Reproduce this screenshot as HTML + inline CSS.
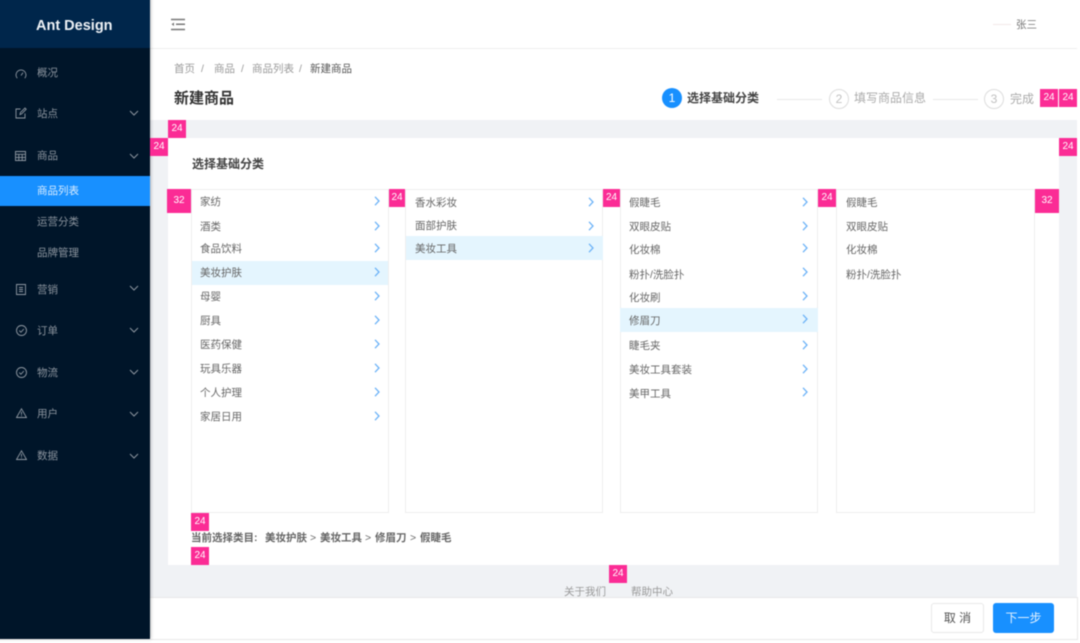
<!DOCTYPE html>
<html lang="zh"><head><meta charset="utf-8"><style>
html,body{margin:0;padding:0;background:#fff}
#o{position:relative;width:1080px;height:643px;overflow:hidden}
#r{position:relative;width:1080px;height:643px;background:#fff;font-family:"Liberation Sans","Noto Sans CJK SC",sans-serif;font-size:10.5px;color:#666;filter:blur(.5px)}
#r div,#r svg{position:absolute}
.t{white-space:nowrap;line-height:14px}
.p{background:#fb2c95;color:#fff;font-size:10px;text-align:center;line-height:18px;width:18px;height:18px}
.m{left:37px;color:#8b949e}
.col{background:#fff;border:1px solid #eee;box-sizing:border-box;top:189px;height:324px}
.hl{background:#e4f5fe;height:24px}
.i{color:#666}
svg.ic{fill:none;stroke:#8f98a2;stroke-width:.9}
svg.ch{fill:none;stroke:#8b949e;stroke-width:1;width:10px;height:6px;left:129px}
svg.ar{fill:none;stroke:#6db3f7;stroke-width:1.3;width:6px;height:10px}
</style></head><body><div id="o"><div id="r">
<div style="left:150px;top:0;width:927px;height:49px;background:#fff;border-bottom:1px solid #eee;box-sizing:border-box"></div>
<div style="left:150px;top:49px;width:927px;height:71px;background:#fff"></div>
<div style="left:150px;top:120px;width:927px;height:477px;background:#f0f2f5"></div>
<div style="left:168px;top:138px;width:891px;height:427px;background:#fff"></div>
<div style="left:150px;top:597px;width:928px;height:43px;background:#fff;border:1px solid #e8e8e8;box-sizing:border-box;border-left:0"></div>

<div style="left:-6px;top:-6px;width:155.5px;height:645px;background:#001529;box-shadow:1px 0 3px rgba(0,0,0,.25)"></div>
<div style="left:-6px;top:-6px;width:155.5px;height:54px;background:#00264b"></div>
<div class="t" style="left:36px;top:18px;font-size:14.5px;font-weight:bold;color:#eef2f6;line-height:16px">Ant Design</div>
<div style="left:-6px;top:176px;width:155.5px;height:30px;background:#1890ff"></div>

<svg class="ic" style="left:15px;top:68px" width="12" height="12" viewBox="0 0 12 12"><path d="M2.2 10.2A5 5 0 1 1 9.8 10.2M6 7.5L8 4.6"/></svg>
<div class="t m" style="top:66px">概况</div>
<svg class="ic" style="left:15px;top:107px" width="12" height="12" viewBox="0 0 12 12"><path d="M10 6.5V11H1V2H5.5M5 7.5L5.4 5.6L10 1L11.2 2.2L6.6 6.9Z"/></svg>
<div class="t m" style="top:107px">站点</div>
<svg class="ch" style="top:110px" viewBox="0 0 10 6"><path d="M1 1L5 5L9 1"/></svg>
<svg class="ic" style="left:15px;top:151px" width="11" height="10" viewBox="0 0 11 10"><path d="M.5.5H10.5V9.5H.5ZM.5 3.3H10.5M.5 6.4H10.5M3.8 3.3V9.5M7.2 3.3V9.5"/></svg>
<div class="t m" style="top:149px">商品</div>
<svg class="ch" style="top:153px" viewBox="0 0 10 6"><path d="M1 1L5 5L9 1"/></svg>
<div class="t" style="left:37px;top:184px;color:#d8ecff">商品列表</div>
<div class="t m" style="top:215px">运营分类</div>
<div class="t m" style="top:246px">品牌管理</div>
<svg class="ic" style="left:16px;top:284px" width="10" height="11" viewBox="0 0 10 11"><path d="M.5.5H9.5V10.5H.5ZM3 3.5H7M3 5.5H7M3 7.5H7"/></svg>
<div class="t m" style="top:283px">营销</div>
<svg class="ch" style="top:285px" viewBox="0 0 10 6"><path d="M1 1L5 5L9 1"/></svg>
<svg class="ic" style="left:16px;top:325px" width="11" height="11" viewBox="0 0 11 11"><circle cx="5.5" cy="5.5" r="5"/><path d="M3.2 5.6L4.9 7.2L7.9 4"/></svg>
<div class="t m" style="top:324px">订单</div>
<svg class="ch" style="top:327px" viewBox="0 0 10 6"><path d="M1 1L5 5L9 1"/></svg>
<svg class="ic" style="left:16px;top:367px" width="11" height="11" viewBox="0 0 11 11"><circle cx="5.5" cy="5.5" r="5"/><path d="M3.2 5.6L4.9 7.2L7.9 4"/></svg>
<div class="t m" style="top:366px">物流</div>
<svg class="ch" style="top:369px" viewBox="0 0 10 6"><path d="M1 1L5 5L9 1"/></svg>
<svg class="ic" style="left:16px;top:408px" width="11" height="10" viewBox="0 0 11 10"><path d="M5.5.8L10.5 9.5H.5ZM5.5 3.8V6.8M5.5 7.4V8.3"/></svg>
<div class="t m" style="top:407px">用户</div>
<svg class="ch" style="top:411px" viewBox="0 0 10 6"><path d="M1 1L5 5L9 1"/></svg>
<svg class="ic" style="left:16px;top:450px" width="11" height="10" viewBox="0 0 11 10"><path d="M5.5.8L10.5 9.5H.5ZM5.5 3.8V6.8M5.5 7.4V8.3"/></svg>
<div class="t m" style="top:449px">数据</div>
<svg class="ch" style="top:453px" viewBox="0 0 10 6"><path d="M1 1L5 5L9 1"/></svg>

<svg style="left:170px;top:18px" width="16" height="13" viewBox="0 0 16 13" fill="none" stroke="#777" stroke-width="1.5"><path d="M1 1.5H15M6 6.3H15M1 11.5H15"/><path d="M4 4.5V8L1.5 6.3Z" fill="#777" stroke="none"/></svg>
<div style="left:993px;top:24px;width:18px;height:1px;background:#f3e9e9"></div>
<div class="t" style="left:1016px;top:18px;color:#777">张三</div>

<div class="t" style="left:174px;top:62px;color:#999">首页</div><div class="t" style="left:201px;top:62px;color:#999">/</div>
<div class="t" style="left:214px;top:62px;color:#999">商品</div><div class="t" style="left:241px;top:62px;color:#999">/</div>
<div class="t" style="left:252px;top:62px;color:#999">商品列表</div><div class="t" style="left:299px;top:62px;color:#999">/</div>
<div class="t" style="left:310px;top:62px;color:#555">新建商品</div>
<div class="t" style="left:174px;top:90px;font-size:15px;font-weight:bold;color:#333;line-height:18px">新建商品</div>

<div style="left:662px;top:88px;width:20px;height:20px;border-radius:50%;background:#1890ff;color:#fff;text-align:center;line-height:20px;font-size:12px">1</div>
<div class="t" style="left:687px;top:91px;font-size:12px;font-weight:bold;color:#444">选择基础分类</div>
<div style="left:777px;top:99px;width:45px;height:1px;background:#e8e8e8"></div>
<div style="left:829px;top:89px;width:20px;height:20px;box-sizing:border-box;border-radius:50%;border:1px solid #ddd;color:#c0c0c0;text-align:center;line-height:18px;font-size:12px">2</div>
<div class="t" style="left:854px;top:91px;font-size:12px;color:#aaa">填写商品信息</div>
<div style="left:933px;top:99px;width:45px;height:1px;background:#e8e8e8"></div>
<div style="left:984px;top:89px;width:20px;height:20px;box-sizing:border-box;border-radius:50%;border:1px solid #ddd;color:#c0c0c0;text-align:center;line-height:18px;font-size:12px">3</div>
<div class="t" style="left:1010px;top:92px;font-size:12px;color:#aaa">完成</div>

<div class="t" style="left:192px;top:157px;font-size:12px;font-weight:bold;color:#444">选择基础分类</div>

<div class="col" style="left:191px;width:198px"></div>
<div class="col" style="left:405px;width:198px"></div>
<div class="col" style="left:620px;width:198px"></div>
<div class="col" style="left:836px;width:199px"></div>
<div class="hl" style="left:192px;top:261px;width:196px"></div>
<div class="hl" style="left:406px;top:236px;width:197px"></div>
<div class="hl" style="left:620px;top:308px;width:198px"></div>

<div class="t i" style="left:200px;top:195px">家纺</div><svg class="ar" style="left:374px;top:196px" viewBox="0 0 6 10"><path d="M1 .8L5 5L1 9.2"/></svg>
<div class="t i" style="left:200px;top:220px">酒类</div><svg class="ar" style="left:374px;top:221px" viewBox="0 0 6 10"><path d="M1 .8L5 5L1 9.2"/></svg>
<div class="t i" style="left:200px;top:242px">食品饮料</div><svg class="ar" style="left:374px;top:243px" viewBox="0 0 6 10"><path d="M1 .8L5 5L1 9.2"/></svg>
<div class="t i" style="left:200px;top:266px">美妆护肤</div><svg class="ar" style="left:374px;top:267px" viewBox="0 0 6 10"><path d="M1 .8L5 5L1 9.2"/></svg>
<div class="t i" style="left:200px;top:290px">母婴</div><svg class="ar" style="left:374px;top:291px" viewBox="0 0 6 10"><path d="M1 .8L5 5L1 9.2"/></svg>
<div class="t i" style="left:200px;top:314px">厨具</div><svg class="ar" style="left:374px;top:315px" viewBox="0 0 6 10"><path d="M1 .8L5 5L1 9.2"/></svg>
<div class="t i" style="left:200px;top:338px">医药保健</div><svg class="ar" style="left:374px;top:339px" viewBox="0 0 6 10"><path d="M1 .8L5 5L1 9.2"/></svg>
<div class="t i" style="left:200px;top:362px">玩具乐器</div><svg class="ar" style="left:374px;top:363px" viewBox="0 0 6 10"><path d="M1 .8L5 5L1 9.2"/></svg>
<div class="t i" style="left:200px;top:386px">个人护理</div><svg class="ar" style="left:374px;top:387px" viewBox="0 0 6 10"><path d="M1 .8L5 5L1 9.2"/></svg>
<div class="t i" style="left:200px;top:410px">家居日用</div><svg class="ar" style="left:374px;top:411px" viewBox="0 0 6 10"><path d="M1 .8L5 5L1 9.2"/></svg>

<div class="t i" style="left:415px;top:196px">香水彩妆</div><svg class="ar" style="left:588px;top:197px" viewBox="0 0 6 10"><path d="M1 .8L5 5L1 9.2"/></svg>
<div class="t i" style="left:415px;top:219px">面部护肤</div><svg class="ar" style="left:588px;top:221px" viewBox="0 0 6 10"><path d="M1 .8L5 5L1 9.2"/></svg>
<div class="t i" style="left:415px;top:242px">美妆工具</div><svg class="ar" style="left:588px;top:243px" viewBox="0 0 6 10"><path d="M1 .8L5 5L1 9.2"/></svg>

<div class="t i" style="left:629px;top:196px">假睫毛</div><svg class="ar" style="left:802px;top:197px" viewBox="0 0 6 10"><path d="M1 .8L5 5L1 9.2"/></svg>
<div class="t i" style="left:629px;top:220px">双眼皮贴</div><svg class="ar" style="left:802px;top:221px" viewBox="0 0 6 10"><path d="M1 .8L5 5L1 9.2"/></svg>
<div class="t i" style="left:629px;top:243px">化妆棉</div><svg class="ar" style="left:802px;top:243px" viewBox="0 0 6 10"><path d="M1 .8L5 5L1 9.2"/></svg>
<div class="t i" style="left:629px;top:268px">粉扑/洗脸扑</div><svg class="ar" style="left:802px;top:267px" viewBox="0 0 6 10"><path d="M1 .8L5 5L1 9.2"/></svg>
<div class="t i" style="left:629px;top:291px">化妆刷</div><svg class="ar" style="left:802px;top:291px" viewBox="0 0 6 10"><path d="M1 .8L5 5L1 9.2"/></svg>
<div class="t i" style="left:629px;top:314px">修眉刀</div><svg class="ar" style="left:802px;top:314px" viewBox="0 0 6 10"><path d="M1 .8L5 5L1 9.2"/></svg>
<div class="t i" style="left:629px;top:339px">睫毛夹</div><svg class="ar" style="left:802px;top:340px" viewBox="0 0 6 10"><path d="M1 .8L5 5L1 9.2"/></svg>
<div class="t i" style="left:629px;top:363px">美妆工具套装</div><svg class="ar" style="left:802px;top:364px" viewBox="0 0 6 10"><path d="M1 .8L5 5L1 9.2"/></svg>
<div class="t i" style="left:629px;top:387px">美甲工具</div><svg class="ar" style="left:802px;top:387px" viewBox="0 0 6 10"><path d="M1 .8L5 5L1 9.2"/></svg>

<div class="t i" style="left:846px;top:196px">假睫毛</div>
<div class="t i" style="left:846px;top:220px">双眼皮贴</div>
<div class="t i" style="left:846px;top:243px">化妆棉</div>
<div class="t i" style="left:846px;top:268px">粉扑/洗脸扑</div>

<div class="t" style="left:191px;top:531px;font-weight:bold;color:#666">当前选择类目:</div>
<div class="t" style="left:265px;top:531px;font-weight:bold;color:#666">美妆护肤</div>
<div class="t" style="left:310px;top:531px;color:#666">&gt;</div>
<div class="t" style="left:320px;top:531px;font-weight:bold;color:#666">美妆工具</div>
<div class="t" style="left:365px;top:531px;color:#666">&gt;</div>
<div class="t" style="left:375px;top:531px;font-weight:bold;color:#666">修眉刀</div>
<div class="t" style="left:410px;top:531px;color:#666">&gt;</div>
<div class="t" style="left:420px;top:531px;font-weight:bold;color:#666">假睫毛</div>

<div class="t" style="left:564px;top:585px;color:#999">关于我们</div>
<div class="t" style="left:631px;top:585px;color:#999">帮助中心</div>

<div style="left:931px;top:603px;width:53px;height:30px;box-sizing:border-box;border:1px solid #e8e8e8;border-radius:3px;background:#fff;color:#555;text-align:center;line-height:28px;font-size:12px">取 消</div>
<div style="left:993px;top:603px;width:61px;height:30px;border-radius:3px;background:#1890ff;color:#e4f2ff;text-align:center;line-height:30px;font-size:12px">下一步</div>

<div class="p" style="left:168px;top:120px">24</div>
<div class="p" style="left:150px;top:138px">24</div>
<div class="p" style="left:1040px;top:89px">24</div>
<div class="p" style="left:1059px;top:89px">24</div>
<div class="p" style="left:1059px;top:138px">24</div>
<div class="p" style="left:167px;top:189px;width:24px;height:24px;line-height:24px">32</div>
<div class="p" style="left:1035px;top:189px;width:24px;height:24px;line-height:24px">32</div>
<div class="p" style="left:389px;top:189px;width:16px">24</div>
<div class="p" style="left:603px;top:189px;width:17px">24</div>
<div class="p" style="left:818px;top:189px;width:18px">24</div>
<div class="p" style="left:191px;top:513px">24</div>
<div class="p" style="left:191px;top:547px">24</div>
<div class="p" style="left:609px;top:565px">24</div>
</div></div></body></html>
